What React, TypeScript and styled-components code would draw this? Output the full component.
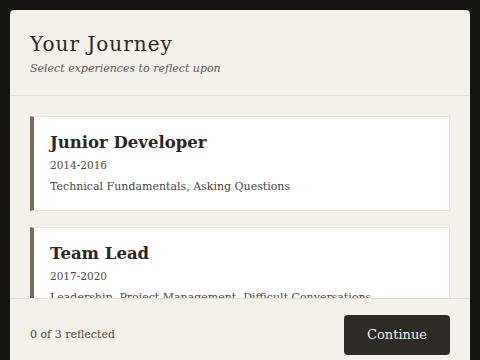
import React from 'react';
import styled, { createGlobalStyle } from 'styled-components';

const GlobalStyle = createGlobalStyle`
  html, body {
    margin: 0;
    padding: 0;
    height: 100%;
    overflow: hidden;
    background: #161412;
  }
  body {
    font-family: Georgia, "DejaVu Serif", serif;
  }
`;

const Page = styled.div`
  padding: 10px;
  height: 100vh;
  box-sizing: border-box;
`;

const Modal = styled.div`
  width: 460px;
  height: 360px;
  background: #f4f1eb;
  border-radius: 4px 4px 0 0;
  display: flex;
  flex-direction: column;
  overflow: hidden;
`;

const Header = styled.div`
  padding: 20px 20px 17px;
  border-bottom: 1px solid #e2ddd5;
  flex-shrink: 0;
`;

const Title = styled.h1`
  margin: 0;
  font-size: 20px;
  font-weight: normal;
  letter-spacing: 1px;
  color: #2b2622;
  line-height: 28px;
`;

const Subtitle = styled.p`
  margin: 2px 0 0;
  font-size: 11px;
  font-style: italic;
  color: #5e5750;
  line-height: 18px;
`;

const Body = styled.div`
  flex: 1;
  overflow: hidden;
  padding: 20px;
  display: flex;
  flex-direction: column;
  gap: 16px;
`;

const Card = styled.div`
  background: #ffffff;
  border: 1px solid #e6e1d9;
  border-left: 4px solid #7b6b5c;
  padding: 14px 16px 14px;
  flex-shrink: 0;
`;

const CardTitle = styled.h2`
  margin: 0;
  font-size: 16.5px;
  font-weight: bold;
  color: #2b2622;
  line-height: 24px;
`;

const Dates = styled.div`
  margin-top: 2px;
  font-size: 10.5px;
  color: #4e4842;
  line-height: 16px;
`;

const Skills = styled.div`
  margin-top: 5px;
  font-size: 11px;
  color: #4a443e;
  line-height: 18px;
`;

const Footer = styled.div`
  flex-shrink: 0;
  border-top: 1px solid #e2ddd5;
  padding: 16px 20px;
  display: flex;
  align-items: center;
  justify-content: space-between;
  height: 72px;
  box-sizing: border-box;
  background: #f4f1eb;
`;

const Count = styled.span`
  font-size: 11px;
  color: #4e4842;
`;

const Button = styled.button`
  background: #2e2a25;
  color: #f4f1eb;
  border: none;
  border-radius: 4px;
  font-family: Georgia, "DejaVu Serif", serif;
  font-size: 13px;
  width: 106px;
  height: 40px;
  cursor: pointer;
`;

const roles = [
  { title: 'Junior Developer', years: '2014-2016', skills: 'Technical Fundamentals, Asking Questions' },
  { title: 'Team Lead', years: '2017-2020', skills: 'Leadership, Project Management, Difficult Conversations' },
  { title: 'Engineering Manager', years: '2021-2024', skills: 'Hiring, Strategy, Mentorship' },
];

export default function App() {
  return (
    <>
      <GlobalStyle />
      <Page>
        <Modal>
          <Header>
            <Title>Your Journey</Title>
            <Subtitle>Select experiences to reflect upon</Subtitle>
          </Header>
          <Body>
            {roles.map((r) => (
              <Card key={r.title}>
                <CardTitle>{r.title}</CardTitle>
                <Dates>{r.years}</Dates>
                <Skills>{r.skills}</Skills>
              </Card>
            ))}
          </Body>
          <Footer>
            <Count>0 of 3 reflected</Count>
            <Button>Continue</Button>
          </Footer>
        </Modal>
      </Page>
    </>
  );
}
